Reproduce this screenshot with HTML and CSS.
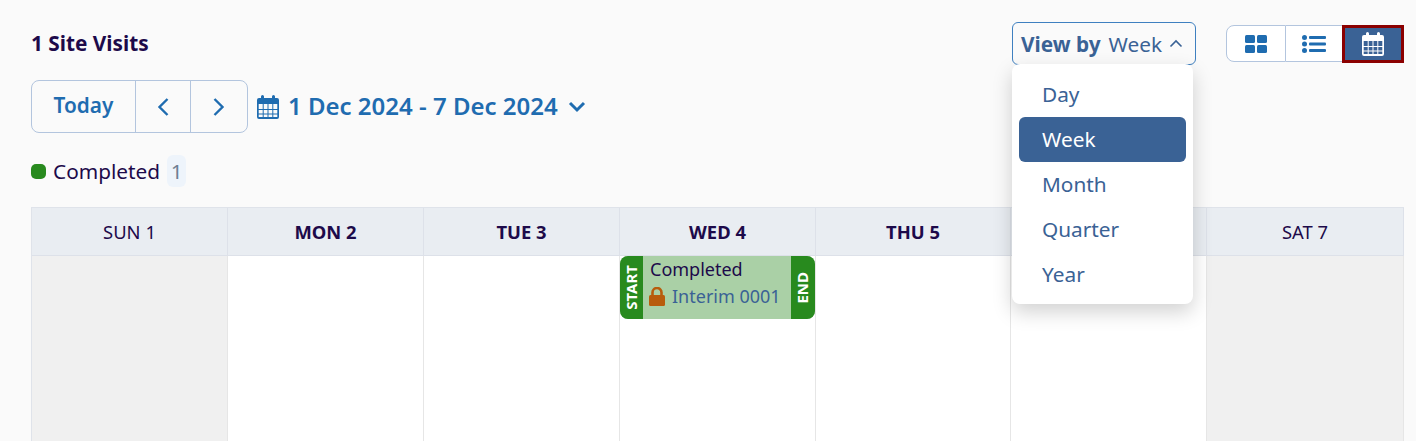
FILE: index.html
```html
<!DOCTYPE html>
<html lang="en">
<head>
    <meta charset="UTF-8">
    <meta name="viewport" content="width=device-width, initial-scale=1.0">
    <title>Site Visits</title>
    <link rel="stylesheet" href="styles.css">
</head>
<body>
    <div class="page">
        <div class="top-row">
            <h1 class="title">1 Site Visits</h1>
            <div class="view-by">
                <button class="view-by-btn">
                    <b>View by</b> <span>Week</span>
                    <svg class="caret" width="14" height="9" viewBox="0 0 14 9"><path d="M1.500 7.500 7 2l5.500 5.500" fill="none" stroke="#3a6295" stroke-width="1.600"/></svg>
                </button>
                <ul class="view-menu">
                    <li>Day</li>
                    <li class="selected">Week</li>
                    <li>Month</li>
                    <li>Quarter</li>
                    <li>Year</li>
                </ul>
            </div>
            <div class="view-toggle">
                <button>
                    <svg width="22" height="18" viewBox="0 0 22 18" fill="#1f6cb0"><rect width="10" height="8" rx="1.500"/><rect x="12" width="10" height="8" rx="1.500"/><rect y="10" width="10" height="8" rx="1.500"/><rect x="12" y="10" width="10" height="8" rx="1.500"/></svg>
                </button>
                <button>
                    <svg width="24" height="18" viewBox="0 0 24 18" fill="#1f6cb0"><circle cx="2.500" cy="2.500" r="2.500"/><circle cx="2.500" cy="9" r="2.500"/><circle cx="2.500" cy="15.500" r="2.500"/><rect x="7" y="1" width="17" height="3" rx="1"/><rect x="7" y="7.500" width="17" height="3" rx="1"/><rect x="7" y="14" width="17" height="3" rx="1"/></svg>
                </button>
                <button class="active">
                    <svg class="cal-icon" width="22" height="24" viewBox="0 0 22 24"><use href="#calendar"/></svg>
                </button>
            </div>
        </div>

        <div class="nav-row">
            <div class="nav-group">
                <button class="today">Today</button>
                <button class="arrow">
                    <svg width="12" height="20" viewBox="0 0 12 20"><path d="M10.500 2 2.500 10l8 8" fill="none" stroke="#1f6cb0" stroke-width="2.400"/></svg>
                </button>
                <button class="arrow next">
                    <svg width="12" height="20" viewBox="0 0 12 20"><path d="m1.500 2 8 8-8 8" fill="none" stroke="#1f6cb0" stroke-width="2.400"/></svg>
                </button>
            </div>
            <svg class="date-icon" width="22" height="24" viewBox="0 0 22 24"><use href="#calendar"/></svg>
            <span class="date-range">1 Dec 2024 - 7 Dec 2024</span>
            <svg class="date-caret" width="18" height="12" viewBox="0 0 18 12"><path d="m2 2 7 7 7-7" fill="none" stroke="#1f6cb0" stroke-width="3"/></svg>
        </div>

        <div class="legend">
            <span class="dot"></span>
            <span class="legend-label">Completed</span>
            <span class="count">1</span>
        </div>

        <div class="calendar">
            <div class="day-head">SUN 1</div>
            <div class="day-head strong">MON 2</div>
            <div class="day-head strong">TUE 3</div>
            <div class="day-head strong">WED 4</div>
            <div class="day-head strong">THU 5</div>
            <div class="day-head strong">FRI 6</div>
            <div class="day-head">SAT 7</div>
            <div class="day weekend"></div>
            <div class="day"></div>
            <div class="day"></div>
            <div class="day">
                <div class="event">
                    <span class="event-edge"><span>START</span></span>
                    <div class="event-body">
                        <div>Completed</div>
                        <div class="event-name">
                            <svg width="16" height="19" viewBox="0 0 16 19"><path d="M3.500 9V5.500a4.500 4.500 0 0 1 9 0V9" fill="none" stroke="#b85c0c" stroke-width="2.600"/><rect y="8" width="16" height="11" rx="1.500" fill="#b85c0c"/></svg>
                            <span>Interim 0001</span>
                        </div>
                    </div>
                    <span class="event-edge end"><span>END</span></span>
                </div>
            </div>
            <div class="day"></div>
            <div class="day"></div>
            <div class="day weekend"></div>
        </div>
    </div>

    <svg width="0" height="0" class="sprites">
        <symbol id="calendar" viewBox="0 0 22 24">
            <path fill-rule="evenodd" fill="currentColor" d="M4 1.500a1.500 1.500 0 0 1 3 0V3h8V1.500a1.500 1.500 0 0 1 3 0V3h2a2 2 0 0 1 2 2v17a2 2 0 0 1-2 2H2a2 2 0 0 1-2-2V5a2 2 0 0 1 2-2h2zM1.700 9v5h4v-5zm5 0v5h3.800v-5zm4.800 0v5h3.800v-5zm4.800 0v5h4v-5zm-14.600 6v3.500h4V15zm5 0v3.500h3.800V15zm4.800 0v3.500h3.800V15zm4.800 0v3.500h4V15zm-14.600 4.500V22h4v-2.500zm5 0V22h3.800v-2.500zm4.800 0V22h3.800v-2.500zm4.800 0V22h4v-2.500z"/>
        </symbol>
    </svg>
</body>
</html>
```

FILE: styles.css
```css
html, body {
    margin: 0;
    padding: 0;
    height: 441px;
    overflow: hidden;
}
body {
    font-family: 'Noto Sans', sans-serif;
    background-color: #fafafa;
    color: #1d0a4a;
}
button {
    font-family: inherit;
    cursor: pointer;
}
.sprites {
    position: absolute;
}
.page {
    padding: 22px 12px 0 31px;
}
.top-row {
    display: flex;
    align-items: flex-start;
    height: 58px;
}
.title {
    flex: 1;
    margin: 7px 0 0;
    font-size: 20.800px;
    line-height: 28px;
    font-weight: 700;
}
.view-by {
    position: relative;
    width: 184px;
    margin-right: 30px;
}
.view-by-btn {
    display: flex;
    align-items: center;
    width: 184px;
    height: 43px;
    padding: 0 8px;
    background-color: #fafafa;
    border: 1px solid #3f80c0;
    border-radius: 6px;
    color: #3a6295;
    font-size: 20.800px;
    white-space: nowrap;
}
.view-by-btn b {
    font-weight: 700;
    margin-right: 8px;
}
.caret {
    margin-left: 7px;
}
.view-menu {
    position: absolute;
    z-index: 10;
    top: 42px;
    left: 0;
    width: 167px;
    margin: 0;
    padding: 8px 7px 7px 7px;
    list-style: none;
    background-color: #fff;
    border-radius: 8px;
    box-shadow: 0 8px 20px rgba(0, 0, 0, 0.18);
    color: #3a6295;
    font-size: 20.800px;
}
.view-menu li {
    height: 45px;
    line-height: 44px;
    padding-left: 23px;
    border-radius: 6px;
}
.view-menu .selected {
    background-color: #3a6295;
    color: #fff;
}
.view-toggle {
    display: flex;
    height: 38px;
    margin-top: 3px;
}
.view-toggle button {
    display: flex;
    align-items: center;
    justify-content: center;
    width: 57px;
    height: 37px;
    padding: 0;
    background-color: #fff;
    border: 1px solid #b3c5de;
    border-left: none;
}
.view-toggle button:first-child {
    width: 60px;
    border-left: 1px solid #b3c5de;
    border-radius: 8px 0 0 8px;
}
.view-toggle .active {
    width: 62px;
    height: 38px;
    margin-left: -1px;
    background-color: #3a6295;
    border: 3px solid #8b0000;
    color: #fff;
}
.nav-row {
    display: flex;
    align-items: center;
    height: 53px;
}
.nav-group {
    display: flex;
    width: 217px;
    height: 53px;
    box-sizing: border-box;
    border: 1px solid #b3c5de;
    border-radius: 8px;
    overflow: hidden;
}
.nav-group button {
    display: flex;
    align-items: center;
    justify-content: center;
    height: 100%;
    padding: 0;
    background: none;
    border: none;
    color: #1f6cb0;
}
.nav-group .today {
    width: 103px;
    padding-bottom: 3px;
    font-size: 20.800px;
    font-weight: 600;
}
.nav-group .arrow {
    width: 55px;
    border-left: 1px solid #b3c5de;
}
.nav-group .next {
    width: 57px;
}
.date-icon {
    color: #1f6cb0;
    margin-left: 9px;
}
.date-range {
    margin-left: 9px;
    padding-bottom: 2px;
    color: #1f6cb0;
    font-size: 24px;
    font-weight: 600;
}
.date-caret {
    margin-left: 10px;
}
.legend {
    display: flex;
    align-items: center;
    height: 32px;
    margin-top: 22px;
    font-size: 20.800px;
}
.dot {
    width: 15px;
    height: 15px;
    border-radius: 5px;
    background-color: #288a1e;
}
.legend-label {
    margin-left: 7px;
}
.count {
    display: flex;
    align-items: center;
    justify-content: center;
    width: 19px;
    height: 32px;
    margin-left: 7px;
    background-color: #eef4fb;
    border-radius: 6px;
    color: #6f7f92;
}
.calendar {
    display: grid;
    grid-template-columns: 196px 196px 196px 196px 195px 196px 197px;
    grid-template-rows: 48px 186px;
    margin-top: 20px;
    border-top: 1px solid #dfe3ea;
    border-left: 1px solid #dfe3ea;
}
.day-head {
    display: flex;
    align-items: center;
    justify-content: center;
    background-color: #e9edf2;
    border-right: 1px solid #dde1e9;
    border-bottom: 1px solid #dde1e9;
    font-size: 18.400px;
}
.strong {
    font-weight: 700;
}
.day {
    background-color: #fff;
    border-right: 1px solid #e6e6e6;
}
.weekend {
    background-color: #f0f0f0;
}
.event {
    display: flex;
    height: 63px;
    background-color: #aad0a6;
    border-radius: 8px;
    overflow: hidden;
    font-size: 18px;
    line-height: 26px;
}
.event-edge {
    display: flex;
    align-items: center;
    justify-content: center;
    width: 23px;
    padding-right: 2px;
    box-sizing: border-box;
    background-color: #288a1e;
    color: #fff;
    font-size: 15px;
    font-weight: 700;
}
.event-edge.end {
    width: 24px;
    padding-right: 3px;
}
.event-edge span {
    writing-mode: vertical-rl;
    transform: rotate(180deg);
}
.event-body {
    flex: 1;
    padding-left: 7px;
}
.event-name {
    display: flex;
    align-items: center;
    gap: 7px;
    margin-top: 1px;
    margin-left: -1px;
    color: #3a6295;
}
```
